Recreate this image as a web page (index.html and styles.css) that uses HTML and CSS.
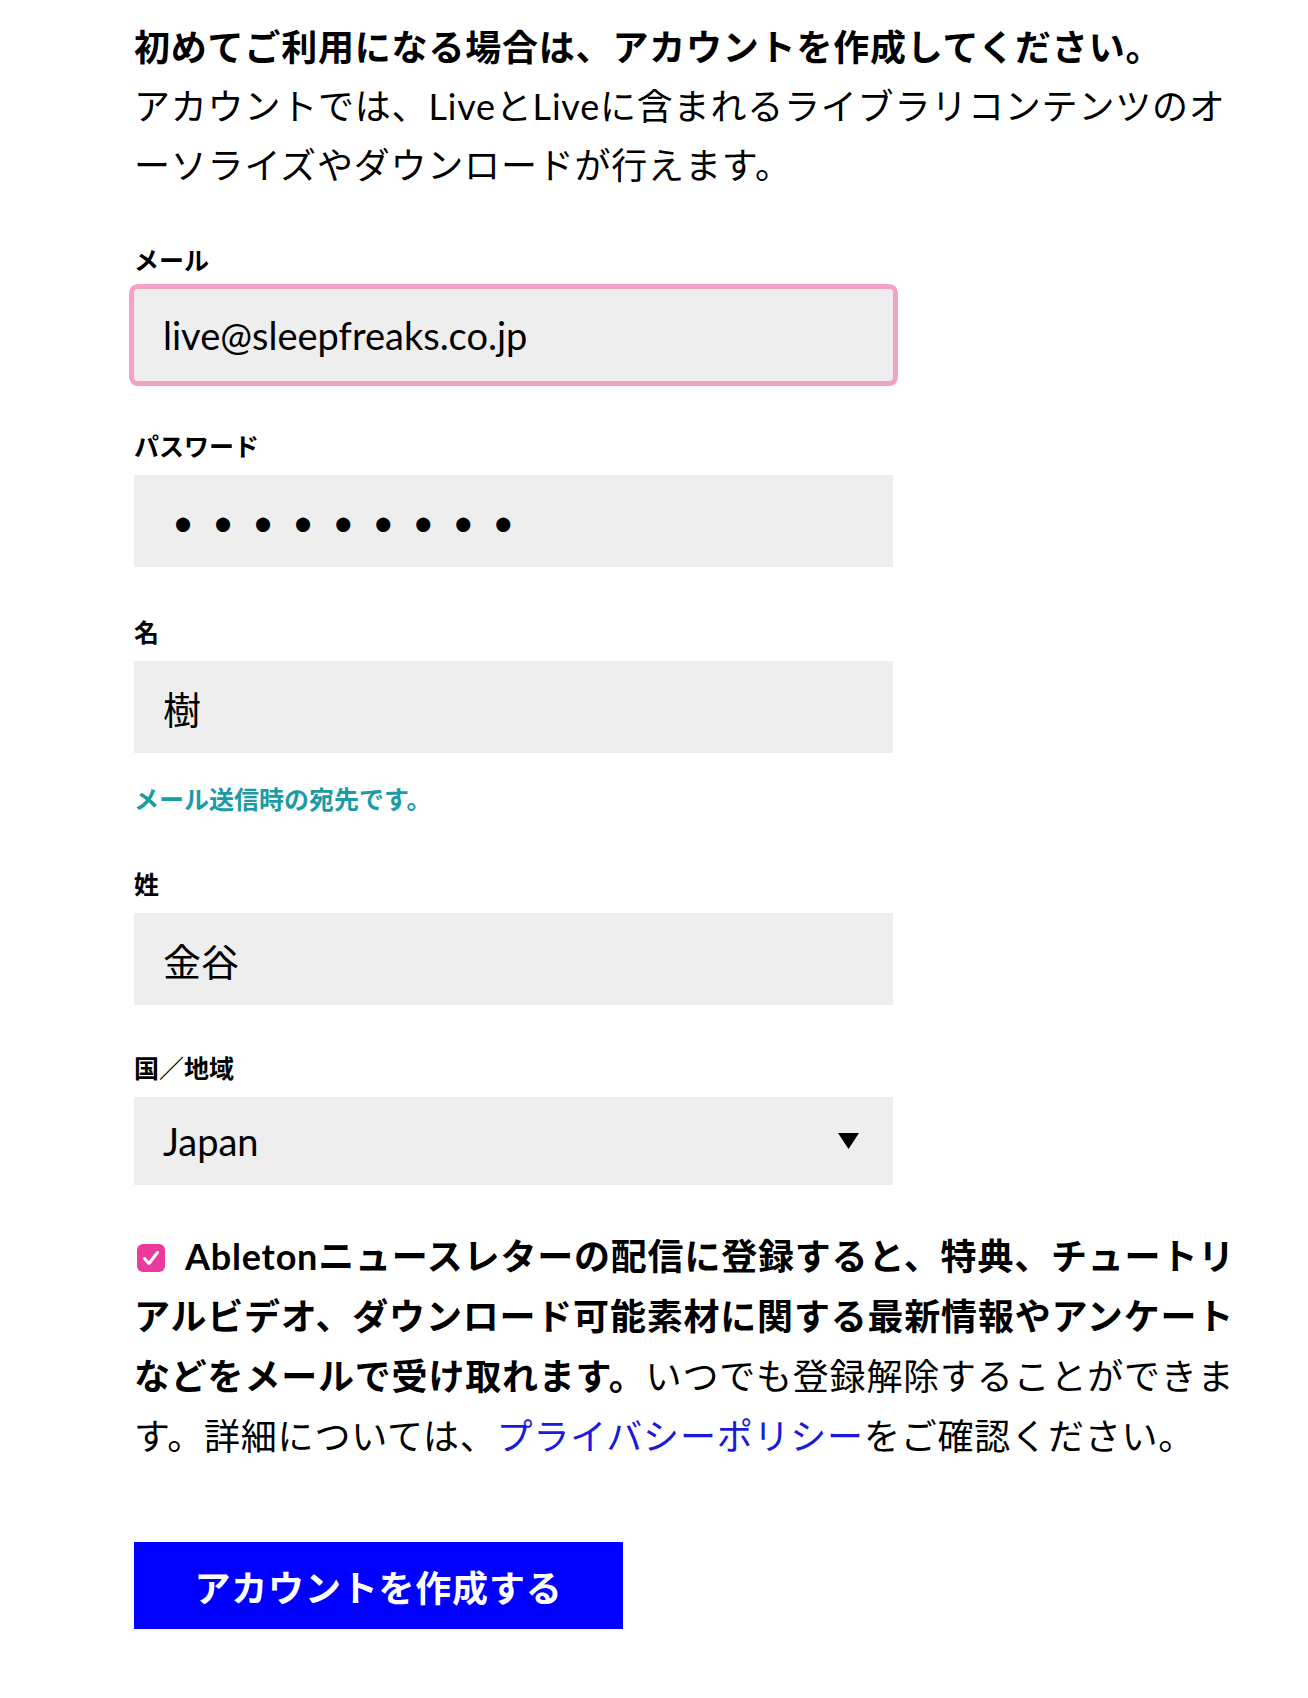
FILE: index.html
```html
<!DOCTYPE html>
<html lang="ja">
<head>
    <meta charset="UTF-8">
    <title>アカウントを作成</title>
    <link rel="stylesheet" href="styles.css">
</head>
<body>

    <div class="page">
        <div class="intro">
            <p class="intro-title">初めてご利用になる場合は、アカウントを作成してください。</p>
            <p>アカウントでは、LiveとLiveに含まれるライブラリコンテンツのオーソライズやダウンロードが行えます。</p>
        </div>

        <form class="signup">
            <div class="field">
                <label for="email">メール</label>
                <input id="email" class="input input-focus" type="email" value="live@sleepfreaks.co.jp">
            </div>

            <div class="field">
                <label for="password">パスワード</label>
                <input id="password" class="input input-password" type="password" value="123456789">
            </div>

            <div class="field">
                <label for="first">名</label>
                <input id="first" class="input" type="text" value="樹">
            </div>
            <p class="hint">メール送信時の宛先です。</p>

            <div class="field">
                <label for="last">姓</label>
                <input id="last" class="input" type="text" value="金谷">
            </div>

            <div class="field field-country">
                <label for="country">国／地域</label>
                <div class="select-wrap">
                    <select id="country" class="input select">
                        <option>Japan</option>
                    </select>
                    <svg class="select-arrow" width="21" height="16" viewBox="0 0 21 16">
                        <path d="M0 0 H21 L10.5 16 Z" fill="#000"/>
                    </svg>
                </div>
            </div>

            <p class="newsletter">
                <span class="checkbox">
                    <svg width="28" height="28" viewBox="0 0 28 28">
                        <rect width="28" height="28" rx="6" fill="#ea3b9c"/>
                        <path d="M7.5 14.5 L12 19.5 L20.5 8.5" fill="none" stroke="#fff" stroke-width="3" stroke-linecap="round" stroke-linejoin="round"/>
                    </svg>
                </span><strong>Abletonニュースレターの配信に登録すると、特典、チュートリアルビデオ、ダウンロード可能素材に関する最新情報やアンケートなどをメールで受け取れます。</strong>いつでも登録解除することができます。詳細については、<a href="#">プライバシーポリシー</a>をご確認ください。
            </p>

            <button type="button" class="submit">アカウントを作成する</button>
        </form>
    </div>

</body>
</html>
```

FILE: styles.css
```css
body {
    margin: 0;
    background: #ffffff;
    color: #000000;
    font-family: 'Lato', 'Noto Sans CJK JP', sans-serif;
}

.page {
    width: 1110px;
    padding: 18px 0 80px 134px;
}

.intro p {
    margin: 0;
    font-size: 36px;
    letter-spacing: 0.8px;
    line-height: 59px;
    line-break: normal;
}

.intro .intro-title {
    font-weight: 700;
}

.signup {
    margin-top: 1px;
}

.field {
    margin-top: 49px;
    width: 759px;
}

.hint + .field {
    margin-top: 53px;
}

.field-country {
    margin-top: 47px;
}

.field label {
    display: block;
    font-size: 25px;
    font-weight: 700;
    line-height: 32px;
    margin-bottom: 13px;
}

.input {
    display: block;
    box-sizing: border-box;
    width: 759px;
    height: 92px;
    margin: 0;
    padding: 0 29px;
    border: none;
    border-radius: 0;
    background: #eeeeee;
    color: #000000;
    font-family: 'Lato', 'Noto Sans CJK JP', sans-serif;
    font-size: 38px;
    outline: none;
}

.input-focus {
    border-radius: 4px;
    box-shadow: 0 0 0 5px #f4a0c8;
}

.input-password {
    padding-left: 38px;
    letter-spacing: 18px;
}

.select-wrap {
    position: relative;
}

.select {
    height: 88px;
    -webkit-appearance: none;
    appearance: none;
}

.select-arrow {
    position: absolute;
    right: 34px;
    top: 36px;
}

.hint {
    margin: 30px 0 0;
    color: #1a9ba6;
    font-size: 25px;
    font-weight: 700;
    line-height: 32px;
}

.newsletter {
    margin: 41px 0 0;
    font-size: 36px;
    letter-spacing: 0.8px;
    line-height: 60px;
}

.newsletter strong {
    font-weight: 700;
}

.newsletter a {
    color: #1a1ad8;
    text-decoration: none;
}

.checkbox {
    display: inline-block;
    vertical-align: -2px;
    margin: 0 20px 0 3px;
    line-height: 0;
}

.submit {
    display: block;
    margin-top: 76px;
    width: 489px;
    height: 87px;
    border: none;
    border-radius: 0;
    background: #0000ff;
    color: #ffffff;
    font-family: 'Lato', 'Noto Sans CJK JP', sans-serif;
    font-size: 36px;
    font-weight: 700;
    letter-spacing: 0.8px;
    cursor: pointer;
}
```
